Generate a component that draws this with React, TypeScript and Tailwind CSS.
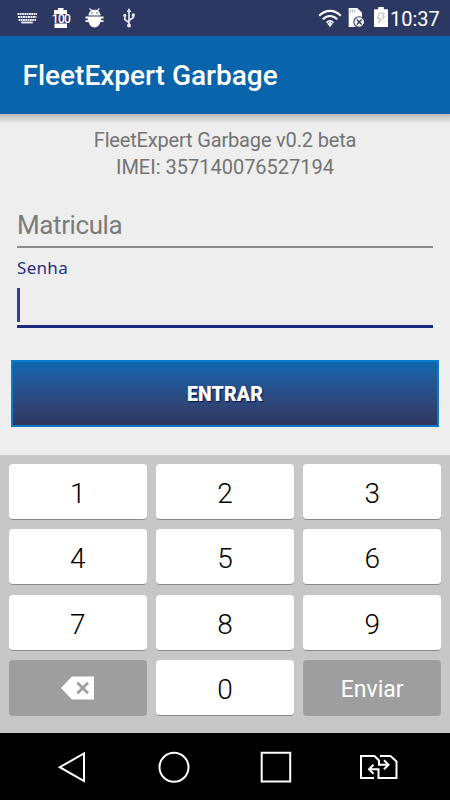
import clsx from 'clsx'

const keys = ['1', '2', '3', '4', '5', '6', '7', '8', '9', 'delete', '0', 'Enviar']

function KeyboardIcon() {
  return (
    <svg className="h-[11px] w-5 shrink-0" viewBox="0 0 20 11" fill="none" stroke="#eef0f6">
      <path d="M0.5 1H20" strokeWidth="1.9" strokeDasharray="1.8 0.5" />
      <path d="M1 4H19.5" strokeWidth="2" strokeDasharray="2 0.5" />
      <path d="M1.5 7H19" strokeWidth="1.9" strokeDasharray="1.8 0.5" />
      <path d="M4.2 9.5H15.8" strokeWidth="1.8" />
    </svg>
  )
}

function BatteryLevelIcon() {
  return (
    <div className="relative h-5 w-5 shrink-0">
      <svg className="h-5 w-5" viewBox="0 0 20 20" fill="#fff">
        <path d="M7 0H12.5V2H16V6H3V2H7ZM3.5 15.5H16V20H3.5Z" />
      </svg>
      <span className="absolute left-0 top-[4px] w-5 text-center text-[12px] font-medium leading-[14px] tracking-[-0.6px]">
        100
      </span>
    </div>
  )
}

function DebugIcon() {
  return (
    <svg className="h-5 w-[19px] shrink-0" viewBox="0 0 19 20" fill="#fff">
      <path d="M3.5 7.6C3.5 5 4.8 3.5 6 2.7L4.1 0.7L4.8 0L7 2.1C8.5 1.5 10.5 1.5 12 2.1L14.2 0L14.9 0.7L13 2.7C14.5 3.7 15.5 5.2 15.5 7.6Z" />
      <path d="M0.5 8.6H18.5V10.4H16.2V12.2H18.5V14H15.3C14.5 17.4 12.5 19.5 9.5 19.5S4.5 17.4 3.7 14H0.5V12.2H2.8V10.4H0.5Z" />
      <circle cx="7" cy="5" r="0.7" fill="#2c3861" />
      <circle cx="12" cy="5" r="0.7" fill="#2c3861" />
    </svg>
  )
}

function UsbIcon() {
  return (
    <svg className="h-5 w-3 shrink-0" viewBox="0 0 12 20" fill="#e4e7f0" stroke="#e4e7f0">
      <path d="M6 3V17M6 14.5L1.8 11.5V8M6 12.5L10.3 9.5V7" fill="none" strokeWidth="1.7" />
      <path d="M6 0L8.4 4H3.6Z" stroke="none" />
      <circle cx="1.8" cy="7.4" r="1.6" stroke="none" />
      <path d="M8.8 5.5H11.8V8.5H8.8Z" stroke="none" />
      <circle cx="6" cy="17.6" r="2" stroke="none" />
    </svg>
  )
}

function WifiIcon() {
  return (
    <svg className="h-[19px] w-6 shrink-0" viewBox="0 0 24 19" fill="none" stroke="#fff" strokeWidth="2.1">
      <path d="M1.2 6.8C7.5 0.2 16.5 0.2 22.8 6.8" />
      <path d="M4.8 10.4C9 5.9 15 5.9 19.2 10.4" />
      <path d="M8 13C10 10.3 14 10.3 16 13L12 18.2Z" fill="#e6e8ee" stroke="none" />
      <path d="M9.6 14.4L10.8 13.2M13.2 13.2L14.4 14.4" stroke="#2c3861" strokeWidth="0.9" />
    </svg>
  )
}

function SimIcon() {
  return (
    <svg className="h-5 w-[17px] shrink-0" viewBox="0 0 17 20">
      <path d="M0.7 0H9.2L14 4.6V19H0.7Z" fill="#fff" />
      <path d="M2.5 1.5V4.5M4.6 1.5V4.5M6.7 1.5V4.5" stroke="#9da2b5" strokeWidth="0.8" />
      <circle cx="11.2" cy="14" r="5.3" fill="#fff" stroke="#2c3861" strokeWidth="1.1" />
      <path d="M8.8 11.6L13.6 16.4M13.6 11.6L8.8 16.4" stroke="#2c3861" strokeWidth="1.4" />
    </svg>
  )
}

function ChargingIcon() {
  return (
    <svg className="h-5 w-[14px] shrink-0" viewBox="0 0 14 20">
      <path d="M4.2 0H9.8V2.3H14V20H0V2.3H4.2Z" fill="#fff" />
      <path d="M5.2 6H10.2L8.6 9.2H10.8L4.4 16L6.2 11.5H3.4Z" fill="none" stroke="#b4b4b4" strokeWidth="0.9" />
    </svg>
  )
}

function StatusBar() {
  return (
    <div className="flex h-9 items-center bg-[#2c3861] pl-[17px] pr-[11px] text-white">
      <KeyboardIcon />
      <div className="ml-[14px] flex">
        <BatteryLevelIcon />
      </div>
      <div className="ml-[14px] flex">
        <DebugIcon />
      </div>
      <div className="ml-[19px] flex">
        <UsbIcon />
      </div>
      <div className="ml-auto flex items-center">
        <WifiIcon />
        <div className="ml-[6px] flex">
          <SimIcon />
        </div>
        <div className="ml-[9px] flex pb-[2px]">
          <ChargingIcon />
        </div>
        <span className="ml-[2px] w-[49px] whitespace-nowrap pt-px text-[20px] leading-9">10:37</span>
      </div>
    </div>
  )
}

function DeleteIcon() {
  return (
    <svg className="h-6 w-[33px]" viewBox="0 0 33 24">
      <path d="M0 12L11 0.5H33V23.5H11Z" fill="#fff" />
      <path d="M16.5 6.7L27 17.3M27 6.7L16.5 17.3" stroke="#9e9e9e" strokeWidth="2.8" />
    </svg>
  )
}

function NavBar() {
  return (
    <nav className="flex h-[67px] items-center bg-black pl-[57px] pr-[52px]">
      <svg className="h-8 w-[30px]" viewBox="0 0 30 32" fill="none" stroke="#fff" strokeWidth="2">
        <path d="M27 2.5V30L2.8 16.2Z" />
      </svg>
      <svg className="ml-[71px] h-8 w-8" viewBox="0 0 32 32" fill="none" stroke="#fff" strokeWidth="2">
        <circle cx="16" cy="16.2" r="14.5" />
      </svg>
      <svg className="ml-[70px] h-8 w-8" viewBox="0 0 32 32" fill="none" stroke="#fff" strokeWidth="2">
        <path d="M1.7 1.8H30.2V30.5H1.7Z" />
      </svg>
      <svg className="ml-auto h-[26px] w-[38px]" viewBox="0 0 38 26" fill="none" stroke="#fff" strokeWidth="2">
        <path d="M14 24H1V2H14.5L19 6.5V10.8H28M24 6.3L28.5 10.8L24 15.3" />
        <path d="M20 2H30.5L36.5 7.5V24H18.5V15.3H9.5M13.5 10.8L9 15.3L13.5 19.8" />
      </svg>
    </nav>
  )
}

export default function App() {
  return (
    <div className="flex h-[800px] w-[450px] flex-col overflow-hidden bg-[#eeeeee] font-['Roboto',sans-serif]">
      <StatusBar />

      {/* App bar */}
      <header className="flex h-[78px] items-center bg-[#0a64ab] pl-[22.5px] pt-[2px]">
        <h1 className="text-[28px] font-medium leading-none text-white">FleetExpert Garbage</h1>
      </header>
      <div className="h-[10px] bg-linear-to-b from-[#bcbcbc] to-[#eeeeee]" />

      {/* Login form */}
      <main className="flex flex-1 flex-col">
        <div className="mt-[3px] text-center text-[20px] leading-[27px] text-[#737373]">
          <p className="tracking-[-0.17px]">FleetExpert Garbage v0.2 beta</p>
          <p>IMEI: 357140076527194</p>
        </div>
        <div className="mx-[17px] mt-[27px] h-[40px] border-b-2 border-[#8a8a8a] text-[26px] leading-[34px] tracking-[-0.4px] text-[#7b7b7b]">
          Matricula
        </div>
        <div className="mx-[17px] mt-[11px] font-['Noto_Sans',sans-serif] text-[17px] leading-[18px] tracking-[0.3px] text-[#23307f]">
          Senha
        </div>
        <div className="mx-[17px] mt-[11px] h-10 border-b-3 border-[#1a2a7f]">
          <div className="h-[34px] w-[2.5px] bg-[#303f8f]" />
        </div>
        <button className="mx-[11px] mt-[32px] h-[67px] border-2 border-[#087cc9] bg-linear-to-b from-[#0a66ae] to-[#303660] pt-[3px] text-[19.5px] font-black tracking-[0.1px] text-white [text-shadow:1px_1px_1px_#08104c]">
          ENTRAR
        </button>
      </main>

      {/* Numeric keypad */}
      <div className="grid h-[278px] grid-cols-3 content-start gap-x-[9.5px] gap-y-[9.5px] bg-[#c7c7c7] px-[9px] pt-[8.5px]">
        {keys.map((key) => (
          <button
            key={key}
            className={clsx(
              'flex h-14 items-center justify-center rounded-[4px]',
              key === 'delete' || key === 'Enviar'
                ? 'bg-[#9e9e9e] text-[23px] text-white'
                : 'border-b border-[#8b8b8b] bg-white pt-[5px] text-[28px] font-[350] text-black',
              key === 'Enviar' && 'pt-[5px]',
            )}
          >
            {key === 'delete' ? <DeleteIcon /> : key}
          </button>
        ))}
      </div>

      <NavBar />
    </div>
  )
}
